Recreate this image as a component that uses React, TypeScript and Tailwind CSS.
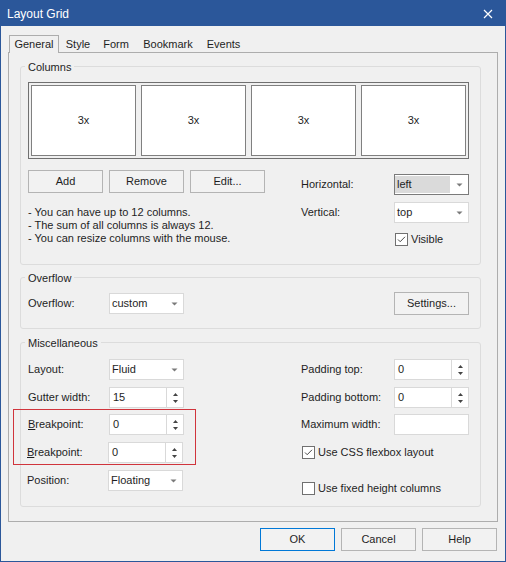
import React from 'react';

interface DropdownProps {
  value: string;
  focused?: boolean;
}

interface SpinnerProps {
  value: string;
}

interface CheckboxProps {
  label: string;
  checked?: boolean;
}

interface GroupBoxProps {
  title: string;
  className?: string;
  children: React.ReactNode;
}

const tabs = [
  { name: 'General', width: 'w-[50px]' },
  { name: 'Style', width: 'w-[38px]' },
  { name: 'Form', width: 'w-[38px]' },
  { name: 'Bookmark', width: 'w-[66px]' },
  { name: 'Events', width: 'w-[45px]' },
];

const hints = [
  '- You can have up to 12 columns.',
  '- The sum of all columns is always 12.',
  '- You can resize columns with the mouse.',
];

function Arrow() {
  return (
    <svg width="7" height="4" viewBox="0 0 7 4" className="ml-auto mr-[5px] shrink-0">
      <polygon points="0.5,0.5 6.5,0.5 3.5,3.5" fill="#7a7a7a" />
    </svg>
  );
}

function Dropdown({ value, focused }: DropdownProps) {
  return (
    <div
      className={`flex h-[21px] w-[75px] shrink-0 items-center border bg-white ${
        focused ? 'border-[#7a7a7a]' : 'border-[#d9d9d9]'
      }`}
    >
      {focused ? (
        <span className="flex h-[17px] w-[55px] items-center bg-[#dadada] pl-[2px]">{value}</span>
      ) : (
        <span className="pl-[2px]">{value}</span>
      )}
      <Arrow />
    </div>
  );
}

function Spinner({ value }: SpinnerProps) {
  return (
    <div className="flex h-[21px] w-[75px] shrink-0 border border-[#d9d9d9] bg-white">
      <span className="flex flex-1 items-center pl-[3px]">{value}</span>
      <div className="flex w-[17px] flex-col items-center justify-center gap-[4px] border-l border-[#d9d9d9]">
        <svg width="5" height="3" viewBox="0 0 5 3">
          <polygon points="2.5,0 5,3 0,3" fill="#444" />
        </svg>
        <svg width="5" height="3" viewBox="0 0 5 3">
          <polygon points="0,0 5,0 2.5,3" fill="#444" />
        </svg>
      </div>
    </div>
  );
}

function Checkbox({ label, checked }: CheckboxProps) {
  return (
    <div className="flex h-[21px] items-center gap-[3px]">
      <div className="flex h-[13px] w-[13px] items-center justify-center border border-[#707070] bg-white">
        {checked && (
          <svg width="11" height="11" viewBox="0 0 11 11">
            <polyline points="2,5.5 4.2,7.7 9,2.8" fill="none" stroke="#333" strokeWidth="0.9" />
          </svg>
        )}
      </div>
      <span>{label}</span>
    </div>
  );
}

function Button({ children, primary }: { children: React.ReactNode; primary?: boolean }) {
  return (
    <div
      className={`flex h-[23px] w-[75px] shrink-0 items-center justify-center border bg-[#f2f2f2] ${
        primary ? 'border-[#0078d7]' : 'border-[#b4b4b4]'
      }`}
    >
      {children}
    </div>
  );
}

function GroupBox({ title, className, children }: GroupBoxProps) {
  return (
    <div className={`w-[461px] rounded-[3px] border border-[#dcdcdc] pl-[7px] pr-[11px] ${className ?? ''}`}>
      <div className="-mt-[8px] h-[16px] leading-[16px]">
        <span className="-ml-[3px] inline-block bg-[#f0f0f0] px-[3px]">{title}</span>
      </div>
      {children}
    </div>
  );
}

function Row({ label, children, className }: { label: React.ReactNode; children: React.ReactNode; className?: string }) {
  return (
    <div className={`flex h-[21px] items-center ${className ?? ''}`}>
      <span className="w-[81px] shrink-0">{label}</span>
      {children}
    </div>
  );
}

function RightRow({ label, children, className }: { label: string; children: React.ReactNode; className?: string }) {
  return (
    <div className={`flex h-[21px] items-center ${className ?? ''}`}>
      <span className="w-[93px] shrink-0">{label}</span>
      {children}
    </div>
  );
}

export default function App() {
  return (
    <div className="flex h-[562px] w-[506px] flex-col border border-[#2b579a] bg-[#f0f0f0] font-['Liberation_Sans',Arial,sans-serif] text-[11px] text-[#1e1e1e]">
      <div className="flex h-[25px] shrink-0 items-center bg-[#2b579a] pl-[6px] pr-[12px] text-[12px] text-white">
        <span>Layout Grid</span>
        <svg width="10" height="10" viewBox="0 0 10 10" className="ml-auto">
          <path d="M1 1 L9 9 M9 1 L1 9" stroke="#fff" strokeWidth="1.2" />
        </svg>
      </div>

      <div className="flex-1 px-[7px] pt-[9px]">
        <div className="relative z-10 flex h-[17px] pl-px">
          {tabs.map((tab, i) => (
            <div
              key={tab.name}
              className={`flex h-[18px] shrink-0 items-center justify-center ${tab.width} ${
                i === 0 ? 'border-x border-t border-[#adadad] bg-[#f0f0f0]' : ''
              }`}
            >
              {tab.name}
            </div>
          ))}
        </div>

        <div className="h-[470px] border border-[#adadad] pl-[11px] pt-[13px]">
          <GroupBox title="Columns" className="h-[199px]">
            <div className="mt-[7px] flex h-[77px] w-[441px] gap-[5px] border border-[#707070] p-[2px]">
              {[1, 2, 3, 4].map((i) => (
                <div key={i} className="flex flex-1 items-center justify-center border border-[#808080] bg-white">
                  3x
                </div>
              ))}
            </div>

            <div className="mt-[11px] flex">
              <div className="w-[273px] shrink-0">
                <div className="flex gap-[6px]">
                  <Button>Add</Button>
                  <Button>Remove</Button>
                  <Button>Edit...</Button>
                </div>
                <div className="mt-[13px] leading-[13px]">
                  {hints.map((h) => (
                    <div key={h}>{h}</div>
                  ))}
                </div>
              </div>
              <div className="flex flex-col">
                <RightRow label="Horizontal:" className="mt-[4px]">
                  <Dropdown value="left" focused />
                </RightRow>
                <RightRow label="Vertical:" className="mt-[7px]">
                  <Dropdown value="top" />
                </RightRow>
                <div className="mt-[6px] pl-[94px]">
                  <Checkbox label="Visible" checked />
                </div>
              </div>
            </div>
          </GroupBox>

          <GroupBox title="Overflow" className="mt-[12px] h-[52px]">
            <div className="mt-[6px] flex h-[23px] items-center">
              <span className="w-[81px] shrink-0">Overflow:</span>
              <Dropdown value="custom" />
              <div className="flex-1" />
              <Button>Settings...</Button>
            </div>
          </GroupBox>

          <GroupBox title="Miscellaneous" className="mt-[13px] h-[165px]">
            <div className="flex">
              <div className="w-[273px] shrink-0">
                <Row label="Layout:" className="mt-[8px]">
                  <Dropdown value="Fluid" />
                </Row>
                <Row label="Gutter width:" className="mt-[7px]">
                  <Spinner value="15" />
                </Row>
                <div className="-ml-[15px] mt-[1px] w-[183px] border border-[#d0343c] pb-[1px] pl-[14px] pt-[4px]">
                  <Row
                    label={
                      <>
                        <span className="underline">B</span>reakpoint:
                      </>
                    }
                  >
                    <Spinner value="0" />
                  </Row>
                  <Row
                    className="-ml-px mt-[7px]"
                    label={
                      <>
                        <span className="underline">B</span>reakpoint:
                      </>
                    }
                  >
                    <Spinner value="0" />
                  </Row>
                </div>
                <Row label="Position:" className="-ml-px mt-[5px]">
                  <Dropdown value="Floating" />
                </Row>
              </div>

              <div className="flex flex-col">
                <RightRow label="Padding top:" className="mt-[8px]">
                  <Spinner value="0" />
                </RightRow>
                <RightRow label="Padding bottom:" className="mt-[7px]">
                  <Spinner value="0" />
                </RightRow>
                <RightRow label="Maximum width:" className="mt-[6px]">
                  <div className="h-[21px] w-[75px] border border-[#d9d9d9] bg-white" />
                </RightRow>
                <div className="mt-[7px] pl-px">
                  <Checkbox label="Use CSS flexbox layout" checked />
                </div>
                <div className="mt-[15px] pl-px">
                  <Checkbox label="Use fixed height columns" />
                </div>
              </div>
            </div>
          </GroupBox>
        </div>

        <div className="mt-[6px] flex justify-end gap-[6px] pr-px">
          <Button primary>OK</Button>
          <Button>Cancel</Button>
          <Button>Help</Button>
        </div>
      </div>
    </div>
  );
}
